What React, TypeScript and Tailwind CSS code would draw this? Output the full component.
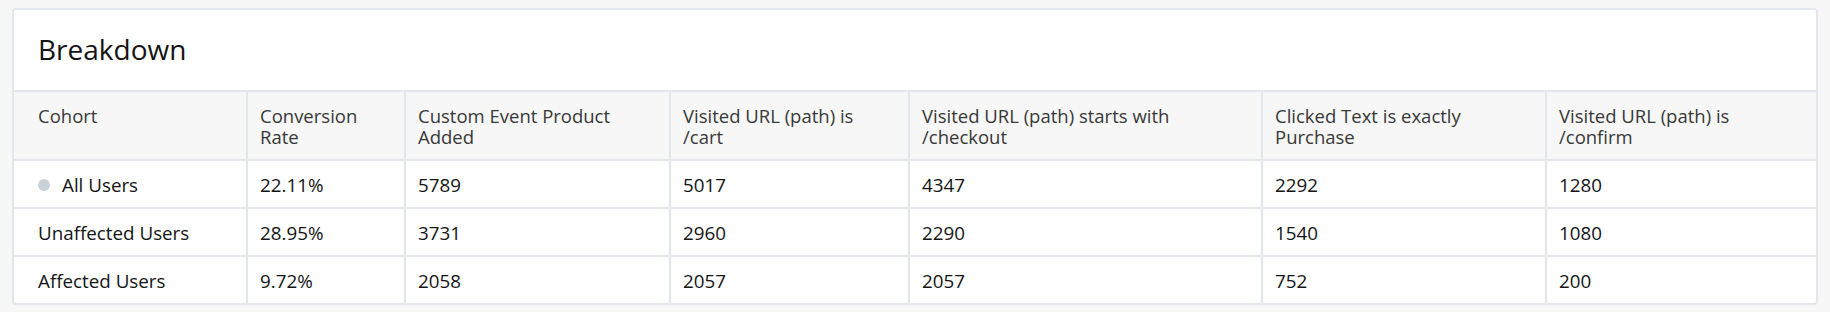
import React from "react";

const cols = [
  "Cohort",
  "Conversion Rate",
  "Custom Event Product Added",
  "Visited URL (path) is /cart",
  "Visited URL (path) starts with /checkout",
  "Clicked Text is exactly Purchase",
  "Visited URL (path) is /confirm",
];

const headers: React.ReactNode[] = [
  <>Cohort</>,
  <>Conversion<br />Rate</>,
  <>Custom Event Product<br />Added</>,
  <>Visited URL (path) is<br />/cart</>,
  <>Visited URL (path) starts with<br />/checkout</>,
  <>Clicked Text is exactly<br />Purchase</>,
  <>Visited URL (path) is<br />/confirm</>,
];

const rows = [
  { name: "All Users", dot: true, vals: ["22.11%", "5789", "5017", "4347", "2292", "1280"] },
  { name: "Unaffected Users", dot: false, vals: ["28.95%", "3731", "2960", "2290", "1540", "1080"] },
  { name: "Affected Users", dot: false, vals: ["9.72%", "2058", "2057", "2057", "752", "200"] },
];

const grid = "grid grid-cols-[232px_158px_265px_239px_353px_284px_1fr]";

export default function App() {
  return (
    <div
      className="min-h-screen bg-[#f7f7f7] pt-2 pb-[6px]"
      style={{ fontFamily: '"Open Sans", "Noto Sans", sans-serif' }}
    >
      <div className="mx-3 rounded-[4px] border-2 border-[#e3e6ea] bg-white overflow-hidden">
        <div className="h-[80px] pl-6 pt-[21px]">
          <h2 className="text-[28px] leading-[36px] text-[#141414] font-normal">Breakdown</h2>
        </div>
        <div className="border-t-2 border-[#e3e6ea]" aria-label={cols.join(", ")}>
          <div className={`${grid} bg-[#f7f7f7] border-b-2 border-[#e3e6ea]`}>
            {headers.map((h, i) => (
              <div
                key={i}
                className={`h-[67px] pt-[13px] text-[18.5px] leading-[21px] text-[#383838] ${
                  i === 0 ? "pl-6" : "pl-3 border-l-2 border-[#e3e6ea]"
                }`}
              >
                {h}
              </div>
            ))}
          </div>
          {rows.map((r, ri) => (
            <div
              key={r.name}
              className={`${grid} ${ri < rows.length - 1 ? "border-b-2 border-[#e3e6ea]" : ""}`}
            >
              <div className="h-[46px] pl-6 flex items-center gap-3 text-[18.8px] leading-[24px] text-[#141414] pt-[1px]">
                {r.dot && <span className="w-3 h-3 rounded-full bg-[#c9d1d9] shrink-0" />}
                <span>{r.name}</span>
              </div>
              {r.vals.map((v, vi) => (
                <div
                  key={vi}
                  className="h-[46px] pl-3 border-l-2 border-[#e3e6ea] flex items-center text-[18.8px] leading-[24px] text-[#141414] pt-[1px]"
                >
                  {v}
                </div>
              ))}
            </div>
          ))}
        </div>
      </div>
    </div>
  );
}
